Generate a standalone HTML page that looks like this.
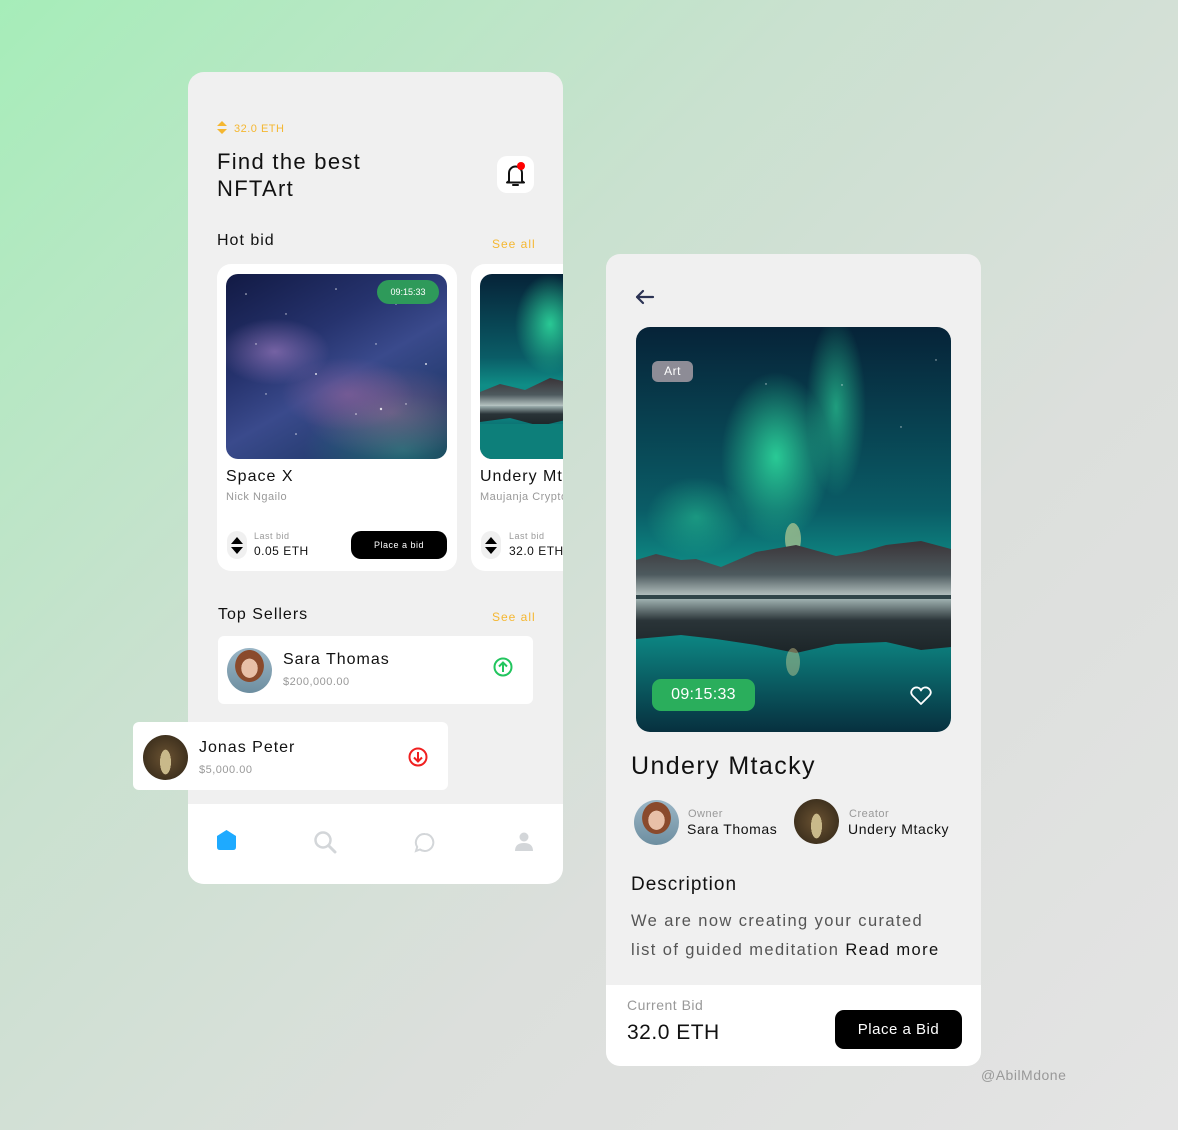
<!DOCTYPE html>
<html><head><meta charset="utf-8"><style>
*{margin:0;padding:0;box-sizing:border-box}
body{width:1178px;height:1130px;overflow:hidden;font-family:"Liberation Sans",sans-serif;background:linear-gradient(135deg,#a6edb9 0%,#c9e1cf 35%,#dcdfdc 65%,#e4e4e4 100%);position:relative;color:#111;letter-spacing:.5px}
.abs{position:absolute}
.phone{position:absolute;background:#f0f0f0;border-radius:16px;overflow:hidden}
.card{position:absolute;background:#fff;border-radius:12px}
.gray{color:#999}
.yel{color:#f5b731}
</style></head><body>
<svg width="0" height="0" style="position:absolute"><defs>
<linearGradient id="sky" x1="0" y1="0" x2="0" y2="1"><stop offset="0" stop-color="#062338"/><stop offset=".45" stop-color="#0a5c66"/><stop offset=".6" stop-color="#0f8d86"/><stop offset=".75" stop-color="#0d8a86"/><stop offset="1" stop-color="#07303f"/></linearGradient>
<radialGradient id="au1" cx=".5" cy=".5" r=".5"><stop offset="0" stop-color="#2fe0a0" stop-opacity=".85"/><stop offset="1" stop-color="#2fe0a0" stop-opacity="0"/></radialGradient>
<linearGradient id="mt" x1="0" y1="0" x2="0" y2="1"><stop offset="0" stop-color="#3a3438"/><stop offset=".6" stop-color="#4d5a5e"/><stop offset="1" stop-color="#b9c6c4"/></linearGradient>
<linearGradient id="mtr" x1="0" y1="0" x2="0" y2="1"><stop offset="0" stop-color="#9fb1b0"/><stop offset=".4" stop-color="#2a3438"/><stop offset="1" stop-color="#1c2528"/></linearGradient>
</defs></svg>

<!-- Left phone -->
<div class="phone" style="left:188px;top:72px;width:375px;height:812px">
  <div class="abs" style="left:29px;top:49px;width:10px;height:14px">
    <svg width="10" height="14"><path d="M5 0L10 5H0Z M0 8H10L5 13Z" fill="#f5b731"/></svg></div>
  <div class="abs yel" style="left:46px;top:51px;font-size:11px">32.0 ETH</div>
  <div class="abs" style="left:29px;top:76px;font-size:22px;line-height:27px;color:#111;letter-spacing:1.3px">Find the best<br>NFTArt</div>
  <div class="abs" style="left:309px;top:84px;width:37px;height:37px;background:#fff;border-radius:10px">
    <svg width="37" height="37"><path d="M12 25V17a6.5 6.5 0 0113 0v8l2 1.5H10Z" fill="none" stroke="#111" stroke-width="2" stroke-linejoin="round"/><path d="M16 29h5" stroke="#111" stroke-width="2" stroke-linecap="round"/><circle cx="24" cy="10" r="4" fill="#f00"/></svg></div>
  <div class="abs" style="left:29px;top:160px;font-size:16px;letter-spacing:1px">Hot bid</div>
  <div class="abs yel" style="left:304px;top:165px;font-size:12px;letter-spacing:1px">See all</div>

  <div class="card" style="left:29px;top:192px;width:240px;height:307px;border-radius:14px">
    <div class="abs" style="left:9px;top:10px;width:221px;height:185px;border-radius:12px;overflow:hidden;background:radial-gradient(ellipse 25% 18% at 22% 42%,rgba(170,130,200,.6),transparent),radial-gradient(ellipse 30% 20% at 55% 65%,rgba(150,100,160,.55),transparent),radial-gradient(ellipse 40% 25% at 75% 75%,rgba(180,120,150,.45),transparent),radial-gradient(ellipse 45% 30% at 80% 95%,rgba(40,130,130,.7),transparent),linear-gradient(150deg,#121a44 0%,#26336e 35%,#3a4a8c 55%,#283e74 75%,#152a4a 100%)">
      <svg width="221" height="185" style="position:absolute;left:0;top:0"><g fill="#fff" opacity=".8"><circle cx="20" cy="20" r=".8"/><circle cx="60" cy="40" r=".7"/><circle cx="110" cy="15" r=".8"/><circle cx="150" cy="70" r=".7"/><circle cx="200" cy="90" r="1"/><circle cx="40" cy="120" r=".7"/><circle cx="90" cy="100" r="1"/><circle cx="130" cy="140" r=".8"/><circle cx="180" cy="130" r=".7"/><circle cx="70" cy="160" r=".8"/><circle cx="170" cy="30" r=".7"/><circle cx="30" cy="70" r=".7"/><circle cx="155" cy="135" r="1.2"/></g></svg>
      <div class="abs" style="right:8px;top:6px;width:62px;height:24px;border-radius:12px;background:#2e9a5a;color:#fff;font-size:9px;text-align:center;line-height:24px;letter-spacing:0">09:15:33</div>
    </div>
    <div class="abs" style="left:9px;top:204px;font-size:16px;letter-spacing:1px">Space X</div>
    <div class="abs gray" style="left:9px;top:227px;font-size:11px">Nick Ngailo</div>
    <div class="abs" style="left:10px;top:267px;width:20px;height:28px;background:#f0f0f0;border-radius:10px"><svg width="20" height="28"><path d="M10 6L16 13H4Z M4 16H16L10 23Z" fill="#000"/></svg></div>
    <div class="abs gray" style="left:37px;top:267px;font-size:9px">Last bid</div>
    <div class="abs" style="left:37px;top:280px;font-size:12px">0.05 ETH</div>
    <div class="abs" style="left:134px;top:267px;width:96px;height:28px;background:#000;border-radius:10px;color:#fff;font-size:9px;text-align:center;line-height:28px">Place a bid</div>
  </div>

  <div class="card" style="left:283px;top:192px;width:120px;height:307px;border-radius:14px;overflow:hidden">
    <div class="abs" style="left:9px;top:10px;width:120px;height:185px;border-radius:12px;overflow:hidden">
      <svg width="120" height="185" viewBox="0 0 120 185" preserveAspectRatio="none"><rect width="120" height="185" fill="url(#sky)"/><ellipse cx="70" cy="50" rx="35" ry="50" fill="url(#au1)"/><path d="M0 118L20 110 45 116 70 104 95 110 120 106V132H0Z" fill="url(#mt)"/><path d="M0 132H120V150L90 145 60 152 30 144 0 148Z" fill="url(#mtr)"/><rect y="150" width="120" height="35" fill="#0d7f7a"/></svg>
    </div>
    <div class="abs" style="left:9px;top:204px;font-size:16px;white-space:nowrap;letter-spacing:1px">Undery Mtacky</div>
    <div class="abs gray" style="left:9px;top:227px;font-size:11px;white-space:nowrap">Maujanja Crypto</div>
    <div class="abs" style="left:10px;top:267px;width:20px;height:28px;background:#f0f0f0;border-radius:10px"><svg width="20" height="28"><path d="M10 6L16 13H4Z M4 16H16L10 23Z" fill="#000"/></svg></div>
    <div class="abs gray" style="left:38px;top:267px;font-size:9px">Last bid</div>
    <div class="abs" style="left:38px;top:280px;font-size:12px;white-space:nowrap">32.0 ETH</div>
  </div>

  <div class="abs" style="left:30px;top:534px;font-size:16px;letter-spacing:1px">Top Sellers</div>
  <div class="abs yel" style="left:304px;top:538px;font-size:12px;letter-spacing:1px">See all</div>
  <div class="card" style="left:30px;top:564px;width:315px;height:68px;border-radius:6px">
    <div class="abs" style="left:9px;top:12px;width:45px;height:45px;border-radius:50%;background:radial-gradient(ellipse 30% 35% at 50% 45%,#e8c0a8 60%,transparent 62%),radial-gradient(ellipse 45% 50% at 50% 40%,#8a4a2c 70%,transparent 72%),linear-gradient(#9bb6c6,#6d8ea0)"></div>
    <div class="abs" style="left:65px;top:15px;font-size:16px;letter-spacing:1px">Sara Thomas</div>
    <div class="abs gray" style="left:65px;top:40px;font-size:11px">$200,000.00</div>
    <svg class="abs" style="left:275px;top:21px" width="20" height="20"><circle cx="10" cy="10" r="8.5" fill="none" stroke="#22c55e" stroke-width="2"/><path d="M10 15V6M6 9.5L10 5.5 14 9.5" fill="none" stroke="#22c55e" stroke-width="2"/></svg>
  </div>
  <div class="abs" style="left:0;top:732px;width:375px;height:80px;background:#fff">
    <svg class="abs" style="left:29px;top:26px" width="19" height="20"><path d="M9.5 0L19 6V17Q19 20 16 20H3Q0 20 0 17V6Z" fill="#1eaaff"/></svg>
    <svg class="abs" style="left:125px;top:26px" width="24" height="24"><circle cx="10" cy="10" r="7.5" fill="none" stroke="#d3d6d9" stroke-width="2.5"/><path d="M15.5 15.5L22 22" stroke="#d3d6d9" stroke-width="3" stroke-linecap="round"/></svg>
    <svg class="abs" style="left:226px;top:28px" width="22" height="22"><path d="M11 2a8.5 8.5 0 11-5 15.5L2 19l1.2-4A8.5 8.5 0 0111 2Z" fill="none" stroke="#d3d6d9" stroke-width="2"/></svg>
    <svg class="abs" style="left:326px;top:28px" width="20" height="20"><circle cx="10" cy="5" r="4.5" fill="#d3d6d9"/><path d="M1 19Q1 11 10 11 19 11 19 19Z" fill="#d3d6d9"/></svg>
  </div>
</div>

<!-- floating Jonas card -->
<div class="card" style="left:133px;top:722px;width:315px;height:68px;border-radius:6px">
  <div class="abs" style="left:10px;top:13px;width:45px;height:45px;border-radius:50%;background:radial-gradient(ellipse 20% 45% at 50% 60%,#c9b98a 60%,transparent 62%),radial-gradient(circle at 50% 50%,#6a5232,#2e2416)"></div>
  <div class="abs" style="left:66px;top:17px;font-size:16px;letter-spacing:1px">Jonas Peter</div>
  <div class="abs gray" style="left:66px;top:42px;font-size:11px">$5,000.00</div>
  <svg class="abs" style="left:275px;top:25px" width="20" height="20"><circle cx="10" cy="10" r="8.5" fill="none" stroke="#f02020" stroke-width="2"/><path d="M10 5V14M6 10.5L10 14.5 14 10.5" fill="none" stroke="#f02020" stroke-width="2"/></svg>
</div>

<!-- Right phone -->
<div class="phone" style="left:606px;top:254px;width:375px;height:812px;border-radius:14px">
  <svg class="abs" style="left:28px;top:35px" width="22" height="16"><path d="M19 8H3M9 2L3 8 9 14" fill="none" stroke="#2c3354" stroke-width="2.2" stroke-linecap="round" stroke-linejoin="round"/></svg>
  <div class="abs" style="left:30px;top:73px;width:315px;height:405px;border-radius:14px;overflow:hidden">
    <svg width="315" height="405" viewBox="0 0 315 405">
      <rect width="315" height="405" fill="url(#sky)"/>
      <ellipse cx="140" cy="130" rx="55" ry="85" fill="url(#au1)"/>
      <ellipse cx="200" cy="80" rx="30" ry="90" fill="url(#au1)" opacity=".7"/>
      <ellipse cx="60" cy="190" rx="50" ry="40" fill="url(#au1)" opacity=".5"/>
      <ellipse cx="157" cy="212" rx="8" ry="16" fill="#e8e29a" opacity=".55"/>
      <path d="M0 233L20 227 45 233 60 232 85 240 120 225 160 218 200 229 225 225 250 218 285 214 315 222V270H0Z" fill="url(#mt)"/>
      <rect y="268" width="315" height="4" fill="#2f4448"/>
      <path d="M0 272H315V320L285 323 250 315 200 317 160 326 120 318 80 312 45 308 0 312Z" fill="url(#mtr)"/>
      <ellipse cx="157" cy="335" rx="7" ry="14" fill="#e8e29a" opacity=".4"/>
      <g fill="#fff" opacity=".7"><circle cx="130" cy="57" r=".7"/><circle cx="206" cy="58" r=".7"/><circle cx="265" cy="100" r=".7"/><circle cx="300" cy="33" r=".7"/><circle cx="30" cy="40" r=".6"/></g>
    </svg>
    <div class="abs" style="left:16px;top:34px;width:41px;height:21px;border-radius:6px;background:#8d8c96;color:#fff;font-size:12px;text-align:center;line-height:21px">Art</div>
    <div class="abs" style="left:16px;top:352px;width:103px;height:32px;border-radius:9px;background:#2aae5c;color:#fff;font-size:16px;text-align:center;line-height:32px;letter-spacing:.3px">09:15:33</div>
    <svg class="abs" style="left:274px;top:359px" width="22" height="20"><path d="M11 18L3 10Q0 7 2 4 4 1 7.5 1.5 10 2 11 4.5 12 2 14.5 1.5 18 1 20 4 22 7 19 10Z" fill="none" stroke="#fff" stroke-width="1.8" stroke-linejoin="round"/></svg>
  </div>
  <div class="abs" style="left:25px;top:498px;font-size:25px;letter-spacing:1.4px">Undery Mtacky</div>
  <div class="abs" style="left:28px;top:546px;width:45px;height:45px;border-radius:50%;background:radial-gradient(ellipse 30% 35% at 50% 45%,#e8c0a8 60%,transparent 62%),radial-gradient(ellipse 45% 50% at 50% 40%,#8a4a2c 70%,transparent 72%),linear-gradient(#9bb6c6,#6d8ea0)"></div>
  <div class="abs gray" style="left:82px;top:554px;font-size:11px">Owner</div>
  <div class="abs" style="left:81px;top:567px;font-size:14px;letter-spacing:.6px">Sara Thomas</div>
  <div class="abs" style="left:188px;top:545px;width:45px;height:45px;border-radius:50%;background:radial-gradient(ellipse 20% 45% at 50% 60%,#c9b98a 60%,transparent 62%),radial-gradient(circle at 50% 50%,#6a5232,#2e2416)"></div>
  <div class="abs gray" style="left:243px;top:554px;font-size:11px">Creator</div>
  <div class="abs" style="left:242px;top:567px;font-size:14px;letter-spacing:.6px">Undery Mtacky</div>
  <div class="abs" style="left:25px;top:620px;font-size:19px;letter-spacing:1px">Description</div>
  <div class="abs" style="left:25px;top:653px;font-size:16.5px;line-height:29px;color:#555;letter-spacing:1.4px">We are now creating your curated<br>list of guided meditation <span style="color:#111">Read more</span></div>
  <div class="abs" style="left:0;top:731px;width:375px;height:81px;background:#fff">
    <div class="abs gray" style="left:21px;top:12px;font-size:14px">Current Bid</div>
    <div class="abs" style="left:21px;top:36px;font-size:21px">32.0 ETH</div>
    <div class="abs" style="left:229px;top:25px;width:127px;height:39px;border-radius:9px;background:#000;color:#fff;font-size:15px;text-align:center;line-height:39px">Place a Bid</div>
  </div>
</div>
<div class="abs" style="left:981px;top:1067px;font-size:14px;color:#999">@AbilMdone</div>
</body></html>
